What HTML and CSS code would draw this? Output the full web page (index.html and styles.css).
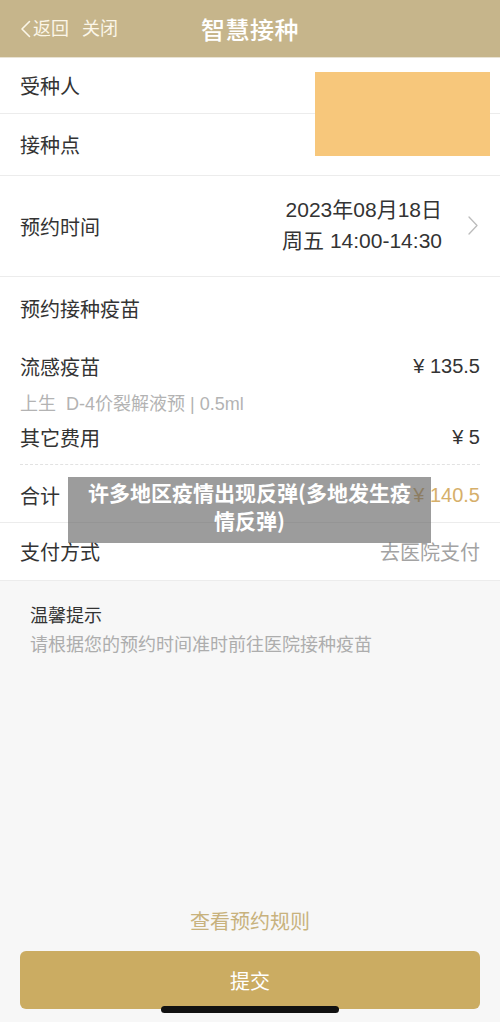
FILE: index.html
```html
<!DOCTYPE html>
<html lang="zh-CN">
<head>
<meta charset="utf-8">
<title>智慧接种</title>
<link rel="stylesheet" href="styles.css">
</head>
<body>
<div class="page">
  <header class="topbar">
    <div class="nav-left">
      <svg class="back-icon" width="11" height="18" viewBox="0 0 11 18"><polyline points="9.5,1.5 2,9 9.5,16.5" fill="none" stroke="#fbf6e8" stroke-width="1.6" stroke-linecap="round" stroke-linejoin="round"/></svg>
      <span class="nav-link">返回</span>
      <span class="nav-link close">关闭</span>
    </div>
    <h1 class="title">智慧接种</h1>
    <div class="nav-right"></div>
  </header>

  <section class="card">
    <div class="row row-person"><span class="label">受种人</span></div>
    <div class="row row-site"><span class="label">接种点</span></div>
    <div class="redact"></div>
  </section>

  <section class="card">
    <div class="row row-time">
      <span class="label">预约时间</span>
      <div class="time-value">
        <div>2023年08月18日</div>
        <div>周五 14:00-14:30</div>
      </div>
      <svg class="chevron" width="10" height="19" viewBox="0 0 10 19"><polyline points="1,1 9,9.5 1,18" fill="none" stroke="#bcbcbc" stroke-width="1.3" stroke-linecap="round" stroke-linejoin="round"/></svg>
    </div>
  </section>

  <section class="card vaccine">
    <div class="vaccine-title">预约接种疫苗</div>
    <div class="line-item first"><span class="label">流感疫苗</span><span class="price">¥ 135.5</span></div>
    <div class="line-sub">上生&nbsp; D-4价裂解液预 | 0.5ml</div>
    <div class="line-item other"><span class="label">其它费用</span><span class="price">¥ 5</span></div>
    <div class="dash"></div>
    <div class="line-item total"><span class="label">合计</span><span class="price gold">¥ 140.5</span></div>
  </section>

  <section class="card">
    <div class="row row-pay"><span class="label">支付方式</span><span class="pay-value">去医院支付</span></div>
  </section>

  <section class="tips">
    <div class="tips-title">温馨提示</div>
    <div class="tips-text">请根据您的预约时间准时前往医院接种疫苗</div>
  </section>

  <div class="spacer"></div>

  <div class="rules">查看预约规则</div>
  <div class="submit-wrap">
    <button class="submit">提交</button>
  </div>

  <div class="overlay">许多地区疫情出现反弹(多地发生疫情反弹)</div>
  <div class="home-bar"></div>
</div>
</body>
</html>
```

FILE: styles.css
```css
* { box-sizing: border-box; }
html, body {
  margin: 0;
  padding: 0;
}
body {
  font-family: "Liberation Sans", "Noto Sans CJK SC", sans-serif;
  color: #333;
  background: #f7f7f7;
}
.page {
  position: relative;
  width: 500px;
  height: 1022px;
  display: flex;
  flex-direction: column;
  background: #f7f7f7;
  overflow: hidden;
}
.topbar {
  height: 58px;
  background: #c6b58b;
  display: grid;
  grid-template-columns: 1fr auto 1fr;
  align-items: center;
  border-bottom: 1px solid #e9e3d4;
}
.nav-left {
  display: flex;
  align-items: center;
  padding-left: 20px;
  color: #fbf6e8;
  font-size: 18px;
  line-height: 24px;
}
.back-icon { margin-right: 2px; margin-top: 1px; }
.nav-link.close { margin-left: 13px; }
.title {
  margin: 0;
  font-family: "Noto Sans CJK SC", sans-serif;
  font-size: 24px;
  font-weight: 500;
  color: #fff;
  letter-spacing: 0.5px;
  line-height: 30px;
}
.card {
  position: relative;
  background: #fff;
  border-bottom: 1px solid #ececec;
}
.row {
  display: flex;
  align-items: center;
  padding: 0 20px;
}
.label {
  font-size: 20px;
  color: #333;
}
.row-person {
  height: 56px;
  border-bottom: 1px solid #ececec;
}
.row-site { height: 61px; }
.redact {
  position: absolute;
  left: 315px;
  top: 14px;
  width: 175px;
  height: 84px;
  background: #f7c77b;
}
.row-time {
  height: 100px;
  padding-right: 22px;
}
.time-value {
  margin-left: auto;
  text-align: right;
  font-size: 21px;
  line-height: 31px;
  color: #333;
  margin-top: -3px;
}
.chevron { margin-left: 26px; margin-top: -2px; }
.vaccine { padding: 0 20px; }
.vaccine-title {
  height: 62px;
  display: flex;
  align-items: center;
  font-size: 20px;
  color: #333;
}
.line-item {
  display: flex;
  justify-content: space-between;
  align-items: center;
}
.line-item.first { height: 36px; margin-top: 9px; }
.line-item.other { height: 34px; }
.line-item.total { height: 57px; padding-top: 3px; }
.price {
  font-size: 20px;
  color: #333;
}
.price.gold { color: #d6af6a; }
.line-sub {
  height: 36px;
  display: flex;
  align-items: center;
  font-size: 18px;
  color: #b3b3b3;
}
.dash {
  margin-top: 10px;
  border-top: 1px dashed #e2e2e2;
}
.row-pay {
  height: 57px;
  justify-content: space-between;
}
.pay-value {
  font-size: 20px;
  color: #a3a3a3;
}
.tips {
  padding: 21px 30px 0;
}
.tips-title {
  font-size: 18px;
  line-height: 28px;
  color: #333;
}
.tips-text {
  font-size: 18px;
  line-height: 30px;
  color: #adadad;
}
.spacer { flex: 1; }
.rules {
  text-align: center;
  font-size: 20px;
  line-height: 30px;
  color: #c8b27d;
  margin-bottom: 14px;
}
.submit-wrap {
  padding: 0 20px 13px;
}
.submit {
  display: block;
  width: 100%;
  height: 58px;
  border: none;
  border-radius: 6px;
  background: #cbac62;
  color: #fff;
  font-family: "Noto Sans CJK SC", sans-serif;
  font-size: 20px;
}
.overlay {
  position: absolute;
  left: 68px;
  top: 477px;
  width: 363px;
  height: 66px;
  padding: 1px 16px 0;
  background: rgba(95, 95, 95, 0.62);
  color: #fff;
  font-family: "Noto Sans CJK SC", sans-serif;
  font-weight: 700;
  font-size: 21px;
  line-height: 28px;
  text-align: center;
}
.home-bar {
  position: absolute;
  left: 161px;
  top: 1006px;
  width: 178px;
  height: 7px;
  border-radius: 4px;
  background: #111;
}
```
